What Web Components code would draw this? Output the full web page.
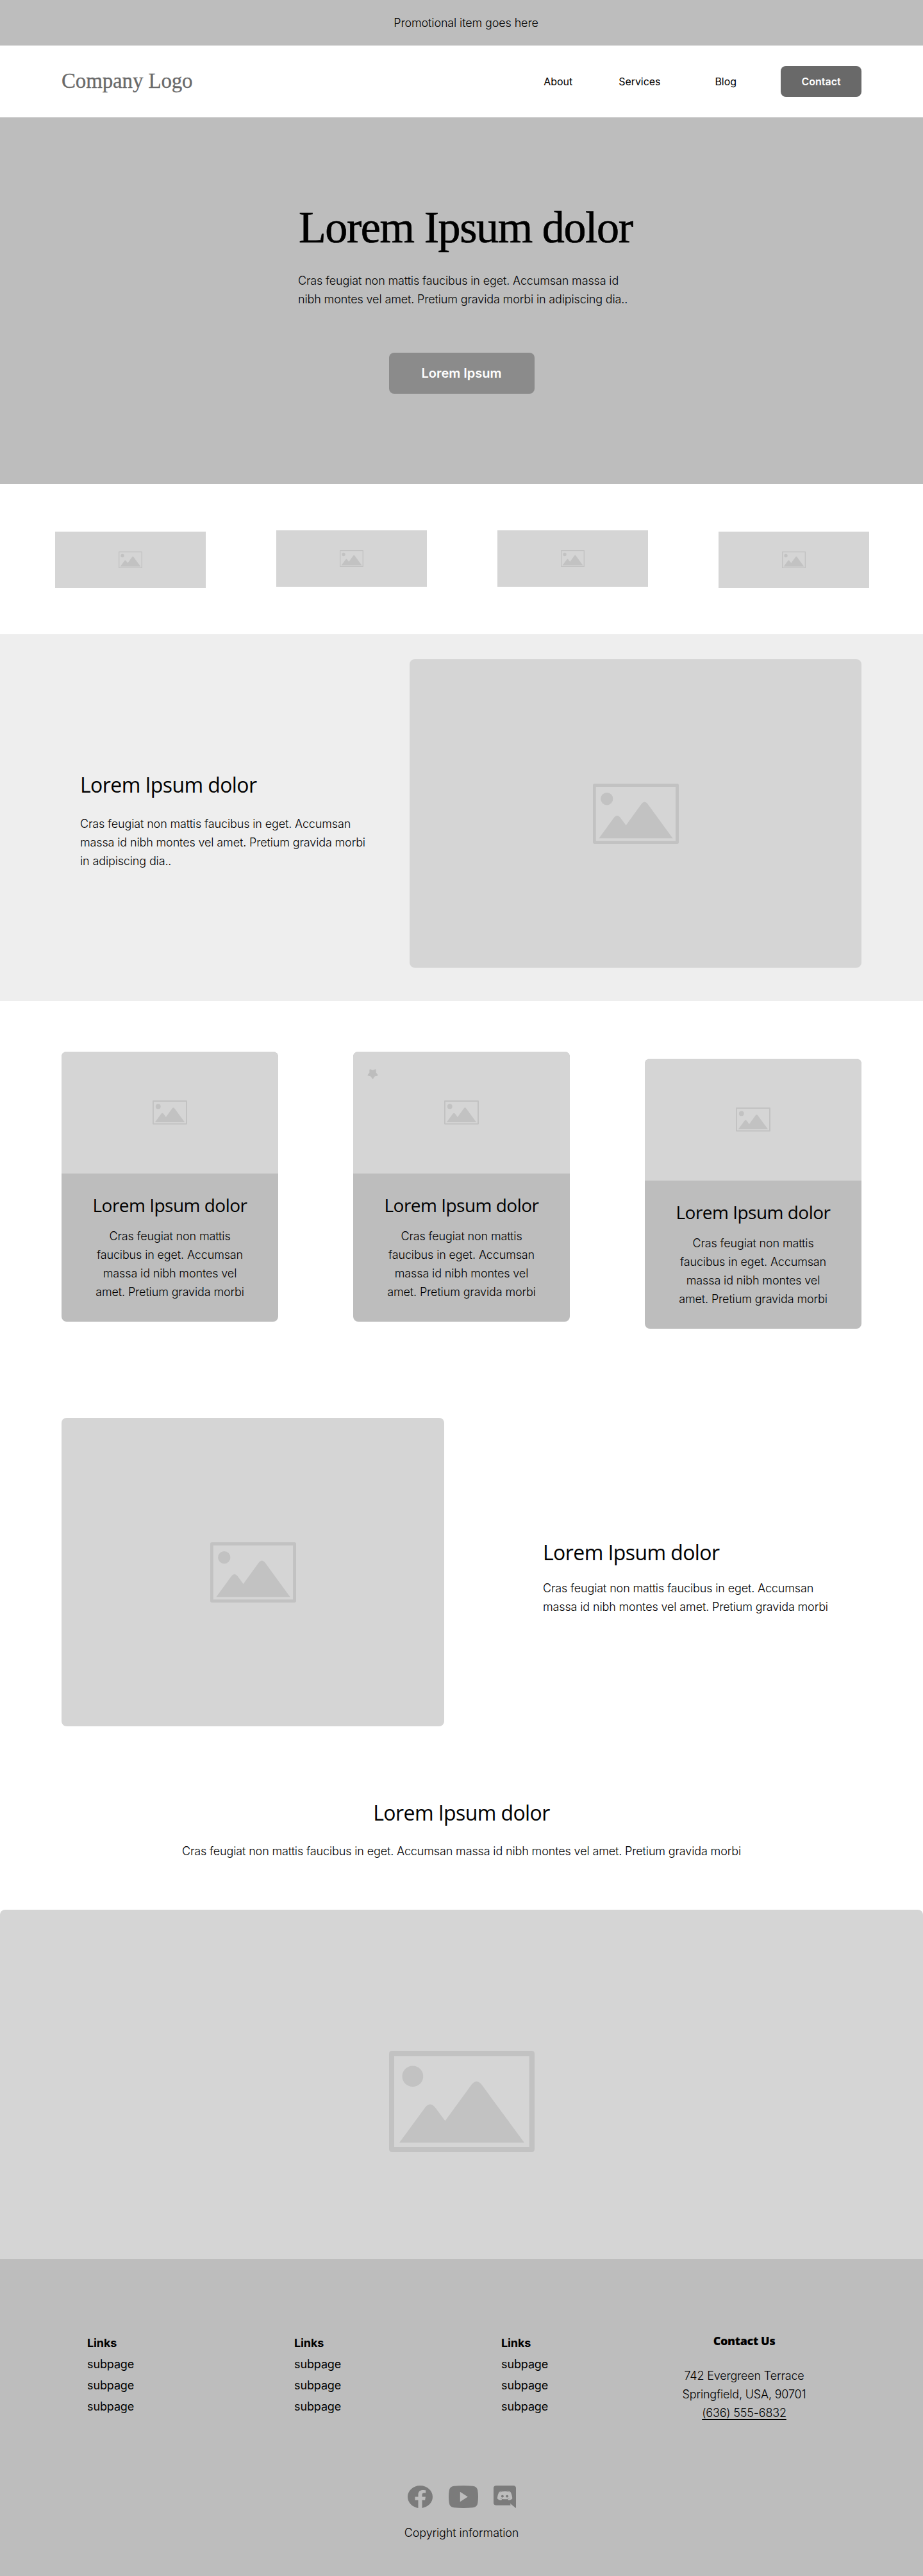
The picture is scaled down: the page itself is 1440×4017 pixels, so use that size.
<!DOCTYPE html>
<html lang="en">
<head>
<meta charset="utf-8">
<title>Company Logo</title>
<style>
  body { margin: 0; background: #fff; color: #000; font: 300 18px/29px Inter, sans-serif; letter-spacing: -0.14px; }
</style>
</head>
<body>
<landing-page></landing-page>
<script>
const define = (name, html) => {
  const template = document.createElement('template');
  template.innerHTML = html;
  customElements.define(name, class extends HTMLElement {
    constructor() {
      super();
      this.attachShadow({ mode: 'open' }).append(template.content.cloneNode(true));
    }
  });
};

define('image-placeholder', `
<style>
  :host { display: flex; align-items: center; justify-content: center; flex: none; box-sizing: border-box;
    background: #d5d5d5; border-radius: var(--radius, 0); }
  svg { display: block; width: var(--icon-w, 134px); height: var(--icon-h, 94px); fill: #c2c2c2; }
</style>
<svg viewBox="0 0 680 473" preserveAspectRatio="none" aria-hidden="true">
  <path fill-rule="evenodd" d="M14 0H666Q680 0 680 14V459Q680 473 666 473H14Q0 473 0 459V14Q0 0 14 0ZM24 25V449H655V25Z"/>
  <circle cx="110.500" cy="119" r="49"/>
  <path d="M48 429L170 263Q192 237 214 263L262 327L386 157Q409 129 432 157L632 429Z"/>
</svg>`);

define('section-heading', `
<style>
  :host { display: block; font: 400 32px/44px "Open Sans", sans-serif; letter-spacing: -0.59px; white-space: nowrap; }
  h2 { margin: 0; font: inherit; }
</style>
<h2><slot></slot></h2>`);

define('promo-bar', `
<style>
  :host { display: flex; height: 71px; align-items: center; justify-content: center; background: #bdbdbd; padding-left: 14px; }
</style>
<span><slot></slot></span>`);

define('site-header', `
<style>
  :host { display: flex; height: 112px; align-items: center; padding: 0 96px; box-sizing: border-box; }
  .logo { flex: 1; font: 400 33px/40px "Liberation Serif", serif; letter-spacing: -0.15px; color: #696969; padding-bottom: 2px;
    -webkit-text-stroke: 0.3px #696969; }
  nav { display: flex; align-items: center; font-weight: 400; font-size: 16px; line-height: 24px; letter-spacing: -0.05px; }
  a { color: #000; text-decoration: none; }
  .services { margin-left: 72px; }
  .blog { margin-left: 85px; }
  .contact { display: flex; width: 126px; height: 48px; margin-left: 69px; align-items: center; justify-content: center;
    border-radius: 8px; background: #696969; color: #fff; font-weight: 600; letter-spacing: 0; }
</style>
<div class="logo">Company Logo</div>
<nav><a>About</a><a class="services">Services</a><a class="blog">Blog</a><a class="contact">Contact</a></nav>`);

define('hero-banner', `
<style>
  :host { display: flex; flex-direction: column; align-items: center; height: 572px; box-sizing: border-box; padding-top: 130px; background: #bdbdbd; }
  .copy { width: 510px; white-space: nowrap; }
  h1 { margin: 0 0 26px 1px; font: 400 70px/84px "Liberation Serif", serif; letter-spacing: -1.4px; -webkit-text-stroke: 0.7px #000; }
  p { margin: 0; }
  button { width: 227px; height: 64px; margin: 69px 0 0; padding: 0; border: 0; border-radius: 8px; background: #8b8b8b;
    color: #fff; font: 600 20px/24px Inter, sans-serif; letter-spacing: 0; }
</style>
<div class="copy"><h1>Lorem Ipsum dolor</h1>
<p>Cras feugiat non mattis faucibus in eget. Accumsan massa id<br>nibh montes vel amet. Pretium gravida morbi in adipiscing dia..</p></div>
<button>Lorem Ipsum</button>`);

define('partner-strip', `
<style>
  :host { display: flex; height: 234px; box-sizing: border-box; padding: 72px 84px 0 86px; gap: 110px; align-items: flex-start; }
  image-placeholder { width: 235px; height: 88px; --icon-w: 37px; --icon-h: 26px; }
  .low { margin-top: 2px; }
</style>
<image-placeholder class="low"></image-placeholder><image-placeholder></image-placeholder><image-placeholder></image-placeholder><image-placeholder class="low"></image-placeholder>`);

define('feature-right', `
<style>
  :host { display: flex; height: 572px; box-sizing: border-box; padding: 39px 96px 0 125px; background: #eee; }
  .copy { width: 514px; padding-top: 174px; box-sizing: border-box; white-space: nowrap; }
  p { margin: 24px 0 0; }
  image-placeholder { width: 705px; height: 481px; --radius: 8px; }
</style>
<div class="copy"><section-heading>Lorem Ipsum dolor</section-heading>
<p>Cras feugiat non mattis faucibus in eget. Accumsan<br>massa id nibh montes vel amet. Pretium gravida morbi<br>in adipiscing dia..</p></div>
<image-placeholder></image-placeholder>`);

define('info-card', `
<style>
  :host { display: block; width: 338px; height: 421px; border-radius: 8px; overflow: hidden; background: #bdbdbd; text-align: center; position: relative; }
  image-placeholder { height: 190px; --icon-w: 54px; --icon-h: 37.500px; }
  section-heading { font-size: 28px; line-height: 38px; letter-spacing: -0.52px; margin-top: 30px; }
  p { margin: 15px 0 0; }
</style>
<image-placeholder></image-placeholder>
<slot name="badge"></slot>
<section-heading>Lorem Ipsum dolor</section-heading>
<p>Cras feugiat non mattis<br>faucibus in eget. Accumsan<br>massa id nibh montes vel<br>amet. Pretium gravida morbi</p>`);

define('card-row', `
<style>
  :host { display: flex; gap: 117px; padding: 79px 96px 139px; align-items: flex-start; }
  .low { margin-top: 11px; }
  .badge { position: absolute; left: 22px; top: 27px; width: 17px; height: 16px; fill: #bdbdbd; }
</style>
<info-card></info-card>
<info-card><svg class="badge" slot="badge" viewBox="0 0 17 16" aria-hidden="true"><path stroke="#bdbdbd" stroke-linejoin="round" d="M4 .7L8.500 2.300L13 .7L13.200 5.500L16.300 9.800L11.500 11L8.500 15.300L5.500 11L.7 9.800L3.800 5.500Z"/></svg></info-card>
<info-card class="low"></info-card>`);

define('feature-left', `
<style>
  :host { display: flex; gap: 154px; padding: 0 96px; height: 481px; }
  image-placeholder { width: 597px; height: 481px; --radius: 8px; }
  .copy { padding-top: 188px; white-space: nowrap; }
  p { margin: 19px 0 0; }
</style>
<image-placeholder></image-placeholder>
<div class="copy"><section-heading>Lorem Ipsum dolor</section-heading>
<p>Cras feugiat non mattis faucibus in eget. Accumsan<br>massa id nibh montes vel amet. Pretium gravida morbi</p></div>`);

define('showcase-section', `
<style>
  :host { display: block; text-align: center; padding-top: 113px; box-sizing: border-box; height: 831px; overflow: hidden; }
  p { margin: 23px 0 77px; }
  image-placeholder { width: 100%; height: 598px; --radius: 8px; --icon-w: 227px; --icon-h: 158px; }
</style>
<section-heading>Lorem Ipsum dolor</section-heading>
<p>Cras feugiat non mattis faucibus in eget. Accumsan massa id nibh montes vel amet. Pretium gravida morbi</p>
<image-placeholder></image-placeholder>`);

define('link-column', `
<style>
  :host { display: flex; flex-direction: column; flex: none; width: 323px; font-weight: 400; line-height: 33px; letter-spacing: -0.12px; }
  strong { font-weight: 700; }
</style>
<strong>Links</strong><a>subpage</a><a>subpage</a><a>subpage</a>`);

define('social-icons', `
<style>
  :host { display: flex; justify-content: center; height: 35px; fill: #7b7b7b; }
  svg { display: block; height: 35px; }
</style>
<svg style="width:39px" viewBox="8 8 496 493" preserveAspectRatio="none" role="img" aria-label="Facebook"><path d="M504 256C504 119 393 8 256 8S8 119 8 256c0 123.780 90.690 226.380 209.250 245V327.690h-63V256h63v-54.640c0-62.150 37-96.480 93.670-96.480 27.140 0 55.520 4.840 55.520 4.840v61h-31.280c-30.800 0-40.410 19.120-40.410 38.730V256h68.780l-11 71.690h-57.780V501C413.310 479.620 504 379.780 504 256z"/></svg>
<svg style="width:46px;margin-left:25px" viewBox="0 0 46 35" role="img" aria-label="YouTube"><path fill-rule="evenodd" d="M8 .8Q23-.8 38 .8Q44.500 1.500 45.300 8Q46.700 17.500 45.300 27Q44.500 33.500 38 34.200Q23 35.800 8 34.200Q1.500 33.500 .7 27Q-.7 17.500 .7 8Q1.500 1.500 8 .8ZM17.800 9.800V25.200L29.800 17.500Z"/></svg>
<svg style="width:35px;margin-left:24px" viewBox="0 0 448 512" preserveAspectRatio="none" role="img" aria-label="Discord"><path d="M297.216 243.200c0 15.616-11.520 28.416-26.112 28.416-14.336 0-26.112-12.800-26.112-28.416s11.520-28.416 26.112-28.416c14.592 0 26.112 12.800 26.112 28.416zm-119.552-28.416c-14.592 0-26.112 12.800-26.112 28.416s11.776 28.416 26.112 28.416c14.592 0 26.112-12.800 26.112-28.416.256-15.616-11.520-28.416-26.112-28.416zM448 52.736V512c-64.494-56.994-43.868-38.128-118.784-107.776l13.568 47.360H52.480C23.552 451.584 0 428.032 0 398.848V52.736C0 23.552 23.552 0 52.480 0h343.040C424.448 0 448 23.552 448 52.736zm-72.960 242.688c0-82.432-36.864-149.248-36.864-149.248-36.864-27.648-71.936-26.880-71.936-26.880l-3.584 4.096c43.520 13.312 63.744 32.512 63.744 32.512-60.811-33.329-132.244-33.335-191.232-7.424-9.472 4.352-15.104 7.424-15.104 7.424s21.248-20.224 67.328-33.536l-2.560-3.072s-35.072-.768-71.936 26.880c0 0-36.864 66.816-36.864 149.248 0 0 21.504 37.120 78.080 38.912 0 0 9.472-11.520 17.152-21.248-32.512-9.728-44.800-30.208-44.800-30.208 3.766 2.636 9.976 6.053 10.496 6.400 43.210 24.198 104.588 32.126 159.744 8.960 8.960-3.328 18.944-8.192 29.440-15.104 0 0-12.800 20.992-46.336 30.464 7.680 9.728 16.896 20.736 16.896 20.736 56.576-1.792 78.336-38.912 78.336-38.912z"/></svg>`);

define('site-footer', `
<style>
  :host { display: block; height: 494px; box-sizing: border-box; padding-top: 114px; background: #bdbdbd; overflow: hidden; }
  .columns { display: flex; padding-left: 136px; height: 239px; }
  .contact { width: 200px; margin-left: -44px; text-align: center; }
  h3 { margin: 1px 0 28px; font: 800 18px/24px "Open Sans", sans-serif; letter-spacing: -0.36px; }
  address { font-style: normal; letter-spacing: -0.18px; }
  a { text-decoration: underline; text-decoration-thickness: 1.500px; text-underline-offset: 3px; text-decoration-skip-ink: none; }
  p { margin: 24px 0 0; text-align: center; }
</style>
<div class="columns"><link-column></link-column><link-column></link-column><link-column></link-column>
<div class="contact"><h3>Contact Us</h3><address>742 Evergreen Terrace<br>Springfield, USA, 90701<br><a>(636) 555-6832</a></address></div></div>
<social-icons></social-icons>
<p>Copyright information</p>`);

define('landing-page', `
<style>:host { display: block; width: 1440px; height: 4017px; overflow: hidden; }</style>
<promo-bar>Promotional item goes here</promo-bar>
<site-header></site-header>
<hero-banner></hero-banner>
<partner-strip></partner-strip>
<feature-right></feature-right>
<card-row></card-row>
<feature-left></feature-left>
<showcase-section></showcase-section>
<site-footer></site-footer>`);
</script>
</body>
</html>
